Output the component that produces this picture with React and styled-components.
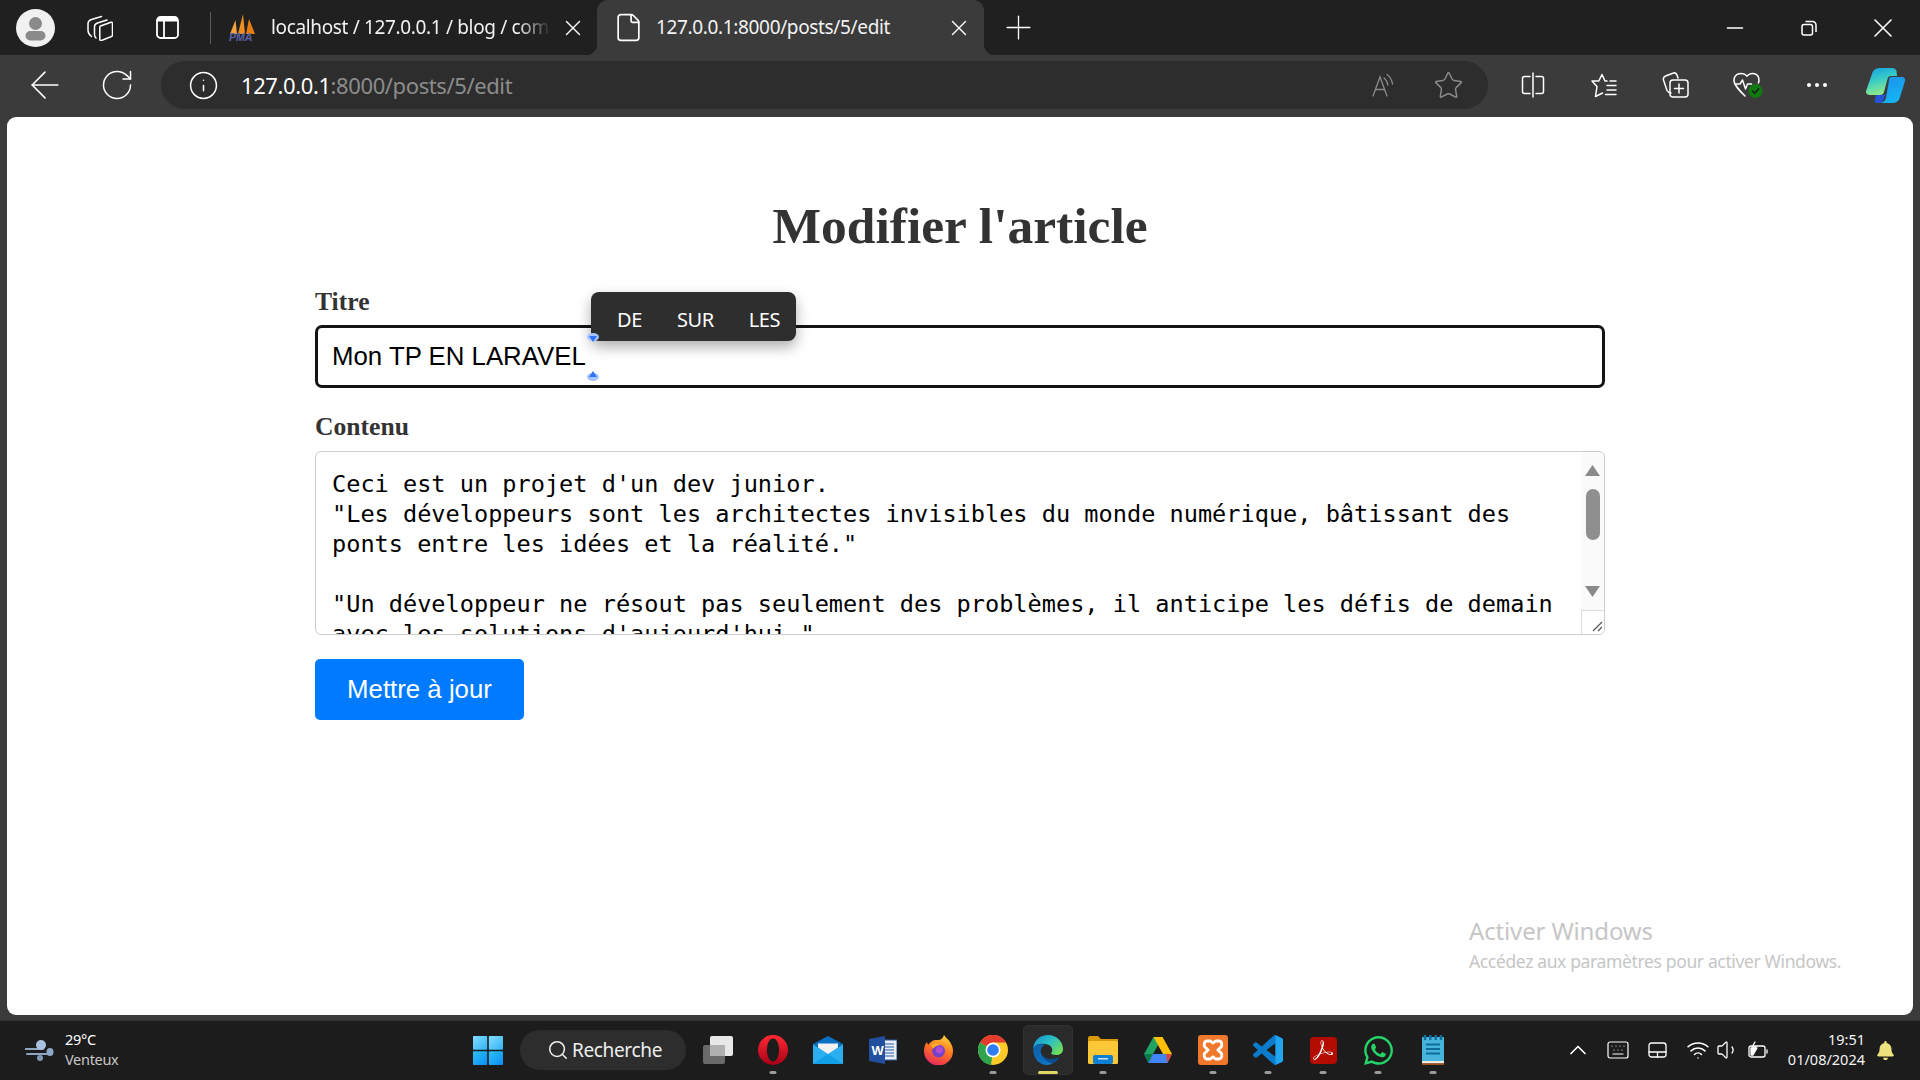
import React from "react";
import styled, { createGlobalStyle } from "styled-components";
import { ArrowLeft, RotateCw, Info, Star, X, Plus, File, Search, Keyboard, ChevronUp, Wifi, Volume1, Minus } from "lucide-react";
import { FaWhatsapp, FaBell } from "react-icons/fa";
import { SiAdobeacrobatreader } from "react-icons/si";

const GlobalStyle = createGlobalStyle`
  html, body { margin: 0; padding: 0; background: #3b3b3b; }
  * { box-sizing: border-box; }
`;

const UI_FONT = `"Noto Sans", "Open Sans", sans-serif`;

const Screen = styled.div`
  width: 1920px;
  height: 1080px;
  overflow: hidden;
  display: flex;
  flex-direction: column;
  background: #3b3b3b;
  font-family: ${UI_FONT};
`;

const TabStrip = styled.div`
  height: 55px;
  flex: none;
  display: flex;
  align-items: center;
  background: #202020;
  color: #fff;
`;

const Slot = styled.span`
  display: flex;
  flex: none;
  align-items: center;
  justify-content: center;
  width: ${(p) => p.$w}px;
  margin-left: ${(p) => p.$ml || 0}px;
  color: ${(p) => p.$color || "#fff"};
  svg { flex: none; }
`;

const Avatar = styled.span`
  flex: none;
  width: 39px;
  height: 38px;
  margin-left: 16px;
  border-radius: 50%;
  background: #f1f1f1;
  overflow: hidden;
  display: flex;
`;

const Separator = styled.span`
  flex: none;
  width: 1px;
  height: 32px;
  margin-left: 31px;
  background: #5a5a5a;
`;

const TabTitle = styled.span`
  flex: none;
  width: ${(p) => p.$w}px;
  margin-left: ${(p) => p.$ml}px;
  margin-bottom: 2px;
  font-size: 19px;
  letter-spacing: -0.35px;
  white-space: nowrap;
  overflow: hidden;
  color: #f2f2f2;
  ${(p) => p.$fade && "mask-image: linear-gradient(to right, #000 88%, transparent 100%);"}
`;

const ActiveTab = styled.div`
  position: relative;
  flex: none;
  width: 387px;
  height: 55px;
  margin-left: 17px;
  display: flex;
  align-items: center;
  background: #3b3b3b;
  border-radius: 11px 11px 0 0;
  &::before, &::after {
    content: "";
    position: absolute;
    bottom: 0;
    width: 11px;
    height: 11px;
  }
  &::before {
    left: -11px;
    background: radial-gradient(circle at 0 0, transparent 11px, #3b3b3b 11.5px);
  }
  &::after {
    right: -11px;
    background: radial-gradient(circle at 100% 0, transparent 11px, #3b3b3b 11.5px);
  }
`;

const WindowControls = styled.div`
  margin-left: auto;
  padding-right: 29px;
  display: flex;
  align-items: center;
`;

const Toolbar = styled.div`
  height: 62px;
  flex: none;
  display: flex;
  align-items: center;
  padding: 6px 0 8px;
  background: #3b3b3b;
`;

const AddressBar = styled.div`
  flex: none;
  width: 1327px;
  height: 48px;
  margin-left: 31px;
  display: flex;
  align-items: center;
  padding-right: 27px;
  border-radius: 24px;
  background: #2d2d2d;
`;

const Url = styled.span`
  margin-left: 25px;
  margin-right: auto;
  margin-bottom: 1px;
  font-size: 22px;
  letter-spacing: -0.4px;
  color: #8c8c8c;
  b { font-weight: 400; color: #fff; }
`;

const Page = styled.main`
  flex: none;
  position: relative;
  width: 1906px;
  height: 898px;
  margin-left: 7px;
  padding-top: 81px;
  display: flex;
  flex-direction: column;
  align-items: center;
  background: #fff;
  border-radius: 9px;
`;

const Heading = styled.h1`
  margin: 0 0 35px;
  font: bold 51.5px/55px "Liberation Serif", serif;
  color: #333;
`;

const Form = styled.form`
  width: 1290px;
  display: flex;
  flex-direction: column;
`;

const Label = styled.label`
  font: bold 25.6px/28px "Liberation Serif", serif;
  color: #333;
  margin-bottom: ${(p) => p.$gap}px;
`;

const InputWrap = styled.div`
  position: relative;
  margin-bottom: 25px;
`;

const TitleInput = styled.input`
  display: block;
  width: 100%;
  height: 63px;
  padding: 0 14px;
  border: 3px solid #141414;
  border-radius: 7px;
  outline: none;
  background: #fff;
  color: #000;
  font: 25.8px "Liberation Sans", Arial, sans-serif;
`;

const Suggestions = styled.div`
  position: absolute;
  left: 276px;
  top: -33px;
  width: 205px;
  height: 49px;
  padding-top: 6px;
  display: flex;
  align-items: center;
  border-radius: 8px;
  background: #2e2e2e;
  box-shadow: 0 6px 14px rgba(0, 0, 0, 0.32);
  z-index: 2;
`;

const Suggestion = styled.span`
  position: relative;
  margin-left: ${(p) => p.$ml}px;
  font-size: 20px;
  letter-spacing: -0.4px;
  color: #fff;
`;

const Handle = styled.span`
  position: absolute;
  left: 272px;
  top: ${(p) => p.$top}px;
  width: 12px;
  height: 8px;
  border-radius: 50%;
  background: #a6c4ff;
  z-index: 3;
  &::after {
    content: "";
    position: absolute;
    left: 2px;
    ${(p) => (p.$down ? "top: 3px;" : "top: -2px;")}
    width: 8px;
    height: 6px;
    background: #2f74f5;
    clip-path: ${(p) => (p.$down ? "polygon(0 0, 100% 0, 50% 100%)" : "polygon(50% 0, 100% 100%, 0 100%)")};
  }
`;

const AreaWrap = styled.div`
  position: relative;
  height: 184px;
  margin-bottom: 24px;
`;

const ContentArea = styled.textarea`
  display: block;
  width: 100%;
  height: 100%;
  padding: 17px 23px 0 16px;
  border: 1.5px solid #ccc;
  border-radius: 6px;
  outline: none;
  resize: none;
  overflow: hidden;
  color: #000;
  font: 23.58px/30px "DejaVu Sans Mono", monospace;
`;

const ScrollBar = styled.div`
  position: absolute;
  top: 2px;
  right: 2px;
  bottom: 2px;
  width: 21px;
  display: flex;
  flex-direction: column;
  align-items: center;
  padding-top: 12px;
  background: #fafafa;
  border-radius: 0 5px 5px 0;
`;

const Arrow = styled.span`
  flex: none;
  width: 15px;
  height: 11px;
  background: #8a8a8a;
  clip-path: ${(p) => (p.$down ? "polygon(0 0, 100% 0, 50% 100%)" : "polygon(50% 0, 100% 100%, 0 100%)")};
`;

const Thumb = styled.span`
  flex: none;
  width: 14px;
  height: 51px;
  margin: 13px 0 46px;
  border-radius: 7px;
  background: #8f8f8f;
`;

const Resizer = styled.span`
  position: absolute;
  right: 1px;
  bottom: 1px;
  width: 23px;
  height: 24px;
  border-top: 1px solid #dcdcdc;
  border-left: 1px solid #dcdcdc;
  background: #fff;
  border-radius: 0 0 5px 0;
  display: flex;
`;

const SubmitButton = styled.button`
  width: 209px;
  height: 61px;
  border: none;
  border-radius: 5px;
  background: #007bff;
  color: #fff;
  font: 25.8px "Liberation Sans", Arial, sans-serif;
`;

const Watermark = styled.div`
  position: absolute;
  left: 1462px;
  top: 799px;
  color: #c6c6c6;
  font-size: 17.5px;
  line-height: 30px;
  letter-spacing: -0.36px;
  white-space: nowrap;
  strong { display: block; font-weight: 400; font-size: 24px; letter-spacing: -0.15px; }
`;

const Taskbar = styled.footer`
  margin-top: 5px;
  flex: none;
  height: 60px;
  padding-bottom: 1px;
  border-top: 1px solid #333;
  display: flex;
  align-items: center;
  background: #1c1c1c;
  color: #fff;
`;

const Weather = styled.div`
  flex: none;
  width: 460px;
  display: flex;
  align-items: center;
  padding-left: 25px;
`;

const WeatherText = styled.div`
  margin: 0 0 2px 11px;
  font-size: 14.5px;
  line-height: 20px;
  letter-spacing: -0.3px;
  span { display: block; color: #c8c8c8; }
`;

const SearchPill = styled.div`
  flex: none;
  width: 166px;
  height: 40px;
  margin: 0 4.5px 0 5px;
  padding-left: 27px;
  display: flex;
  align-items: center;
  gap: 3px;
  border-radius: 20px;
  background: #2d2d2d;
  font-size: 19px;
  letter-spacing: -0.35px;
  color: #eee;
`;

const TaskSlot = styled.div`
  position: relative;
  flex: none;
  width: 55px;
  height: 50px;
  display: flex;
  align-items: center;
  justify-content: center;
  &::before {
    content: "";
    display: ${(p) => (p.$active ? "block" : "none")};
    position: absolute;
    inset: 0 2.5px;
    border-radius: 5px;
    background: #2a2a2a;
    border: 1px solid #323232;
  }
  svg { position: relative; }
`;

const Dot = styled.span`
  position: absolute;
  left: 50%;
  bottom: 1px;
  width: ${(p) => (p.$active ? 20 : 7)}px;
  height: 3px;
  transform: translateX(-50%);
  border-radius: 2px;
  background: ${(p) => (p.$active ? "#dcd862" : "#9a9a9a")};
`;

const Tray = styled.div`
  margin-left: auto;
  padding-right: 26px;
  display: flex;
  align-items: center;
`;

const Clock = styled.div`
  flex: none;
  width: 80px;
  margin: 0 0 2px 17px;
  text-align: right;
  font-size: 14.5px;
  line-height: 20px;
  color: #f4f4f4;
`;

/* ---- drawn icons ---- */

const Line = { fill: "none", stroke: "currentColor", strokeWidth: 1.5, strokeLinecap: "round", strokeLinejoin: "round" };

const ProfileGlyph = () => (
  <svg width="39" height="38" viewBox="0 0 39 38">
    <circle cx="19.5" cy="14.5" r="6.5" fill="#8a8a8a" />
    <rect x="9.5" y="22" width="20" height="9.5" rx="4.7" fill="#8a8a8a" />
  </svg>
);

const WorkspacesIcon = () => (
  <svg width="26" height="26" viewBox="0 0 26 26" {...Line}>
    <path d="M13.500 11 24 7.200c.8-.2 1.500.3 1.500 1.100V20c0 .8-.4 1.300-1 1.500l-10 4c-1 .3-1.700-.3-1.700-1.200V12.500c0-.8.200-1.300.700-1.500z" />
    <path d="M20 5 10.500 8c-2 .7-3 1.700-3 3.500v8c0 1.500.5 2.700 1.500 3.500" />
    <path d="M14.500 1.500 4.500 4.500C2.500 5.200 1 6.500 1 8.500v7c0 2.500 1.500 4.500 3.500 6" />
  </svg>
);

const VerticalTabsIcon = () => (
  <svg width="23" height="23" viewBox="0 0 23 23" fill="none" stroke="currentColor" strokeWidth="1.8">
    <rect x="1" y="1" width="21" height="21" rx="3.500" />
    <path d="M1 4.500h21M8 5v17" />
    <path d="M2 3h19" strokeWidth="3" />
  </svg>
);

const PmaIcon = () => (
  <svg width="27" height="27" viewBox="0 0 27 27">
    <path d="M1 20 6.500 6 8 20z" fill="#f5a23a" />
    <path d="M9 20 14 0l2 20z" fill="#ef8f22" />
    <path d="M17 20 20 5l6 15z" fill="#e77d10" />
    <text x="0" y="27" fontFamily="Liberation Sans" fontStyle="italic" fontWeight="700" fontSize="10.500" fill="#5a64a8">PMA</text>
  </svg>
);

const RestoreIcon = () => (
  <svg width="16" height="16" viewBox="0 0 16 16" {...Line} strokeLinecap="butt">
    <rect x="1" y="4.500" width="10.500" height="10.500" rx="2" />
    <path d="M4.500 1.500h7a3.500 3.500 0 0 1 3.500 3.500v7" />
  </svg>
);

const ReadAloudIcon = () => (
  <svg width="24" height="24" viewBox="0 0 24 24" fill="none" stroke="currentColor" strokeWidth="1.300" strokeLinecap="round">
    <path d="M1 23 8 4l7 19M3.500 16.500h9" />
    <path d="M12 5c2 1.500 3.500 4 3.800 7M15 1.500c3 2.300 5 5.500 5.500 9.500" />
  </svg>
);

const SplitIcon = () => (
  <svg width="24" height="26" viewBox="0 0 24 26" {...Line}>
    <path d="M9 4.500H3.500a2 2 0 0 0-2 2v13a2 2 0 0 0 2 2H9M15 4.500h5.500a2 2 0 0 1 2 2v13a2 2 0 0 1-2 2H15" />
    <path d="M12 1v24" />
  </svg>
);

const FavoritesIcon = () => (
  <svg width="26" height="25" viewBox="0 0 26 25" {...Line}>
    <path d="M11 1.500 14 8h2M7.800 8H1l5 5.500L4.500 23.500 11.500 20M11 1.500 7.800 8" />
    <path d="M16 12.500h9M16 17h9M14.500 21.500H25M19 8h6" />
  </svg>
);

const CollectionsIcon = () => (
  <svg width="27" height="26" viewBox="0 0 27 26" {...Line}>
    <path d="M9 21c-2 0-3-.7-4-2.500L1.500 8C1 6 1.700 4.800 3.500 4l8-3c2-.500 3 .5 3.500 2l1 3" />
    <rect x="8" y="8" width="18" height="17" rx="3" />
    <path d="M17 12v9M12.500 16.500h9" />
  </svg>
);

const HealthIcon = () => (
  <svg width="30" height="26" viewBox="0 0 30 26" {...Line}>
    <path d="M14 4C10 -.500 1 1 1 8.500 1 13 6 18 12 24" />
    <path d="M14 4c4-4.500 12-3 12 4 0 1-.2 2-.6 3" />
    <path d="M2 12h5l2.500-4 3 9 2-5h4" />
    <circle cx="22.500" cy="19" r="7" fill="#0f7b0f" stroke="none" />
    <path d="m19.500 19 2.200 2.300 4-4.500" stroke="#1c1c1c" strokeWidth="1.600" />
  </svg>
);

const DotsIcon = () => (
  <svg width="22" height="6" viewBox="0 0 22 6" fill="currentColor">
    <circle cx="3" cy="3" r="2" />
    <circle cx="11" cy="3" r="2" />
    <circle cx="19" cy="3" r="2" />
  </svg>
);

const CopilotIcon = () => (
  <svg width="39" height="35" viewBox="0 0 39 35">
    <defs>
      <linearGradient id="copA" x1="0" y1="0" x2="0.3" y2="1">
        <stop offset="0" stopColor="#0f9fe8" />
        <stop offset="0.55" stopColor="#3fd0c0" />
        <stop offset="1" stopColor="#8fe88c" />
      </linearGradient>
      <linearGradient id="copB" x1="0" y1="0" x2="0.4" y2="1">
        <stop offset="0" stopColor="#1f8fe8" />
        <stop offset="1" stopColor="#14b4f4" />
      </linearGradient>
    </defs>
    <path d="M23 0h3c2 0 4 1 4.500 3L31 8h-6c-2 0-3 1-3.500 3L18 24c-.5 2-2 3-4 3H4c-3 0-4.500-2-4-4L6 6c1-4 4-6 8-6z" fill="url(#copA)" />
    <path d="M10 27h6l4-1-3 7c-.500 1-1.500 2-3 2h-3c-2 0-3-2-2-4z" fill="#2554d8" />
    <path d="M25 9h11c2 0 3.500 1.500 3 4L34 29c-1 4-4 6-8 6H13c4 0 6-2 7-5l3-18c.3-2 1-3 2-3z" fill="url(#copB)" />
  </svg>
);

const WindIcon = () => (
  <svg width="29" height="21" viewBox="0 0 29 21">
    <path d="M0 9h18M2 14h24" stroke="#8fa4bf" strokeWidth="2" strokeLinecap="round" />
    <ellipse cx="16" cy="5" rx="5" ry="5" fill="#a9c0de" />
    <ellipse cx="15" cy="18" rx="3" ry="3" fill="#7f97b8" />
    <ellipse cx="25" cy="12" rx="3.500" ry="4" fill="#8ea8c9" />
  </svg>
);

const WindowsLogo = () => (
  <svg width="30" height="29" viewBox="0 0 30 29">
    <defs>
      <linearGradient id="winT" x1="0" y1="0" x2="1" y2="1">
        <stop offset="0" stopColor="#86dcff" />
        <stop offset="1" stopColor="#2fb4f6" />
      </linearGradient>
      <linearGradient id="winB" x1="0" y1="0" x2="1" y2="1">
        <stop offset="0" stopColor="#2fc0fb" />
        <stop offset="1" stopColor="#0b8ef0" />
      </linearGradient>
    </defs>
    <rect x="0" y="0" width="14.200" height="13.800" rx="1" fill="url(#winT)" />
    <rect x="15.800" y="0" width="14.200" height="13.800" rx="1" fill="url(#winT)" />
    <rect x="0" y="15.200" width="14.200" height="13.800" rx="1" fill="url(#winB)" />
    <rect x="15.800" y="15.200" width="14.200" height="13.800" rx="1" fill="url(#winB)" />
  </svg>
);

const TaskViewIcon = () => (
  <svg width="30" height="28" viewBox="0 0 30 28">
    <rect x="0" y="9" width="22" height="19" rx="2" fill="#6a6a6a" />
    <rect x="7" y="0" width="23" height="20" rx="2" fill="#e8e8e8" />
    <rect x="7" y="9" width="15" height="11" fill="#b0b0b0" />
  </svg>
);

const OperaIcon = () => (
  <svg width="30" height="30" viewBox="0 0 30 30">
    <defs>
      <linearGradient id="opr" x1="0" y1="0" x2="0" y2="1">
        <stop offset="0" stopColor="#ff2a35" />
        <stop offset="1" stopColor="#a70014" />
      </linearGradient>
    </defs>
    <circle cx="15" cy="15" r="15" fill="url(#opr)" />
    <ellipse cx="15" cy="15" rx="6.200" ry="11.500" fill="#1c1c1c" />
  </svg>
);

const MailIcon = () => (
  <svg width="30" height="28" viewBox="0 0 30 28">
    <path d="M0 8 15 0l15 8-15 9z" fill="#0b6fc4" />
    <path d="M5 7.500h20V13l-10 6-10-6z" fill="#f2f2f2" />
    <path d="M0 8l15 10L30 8v20H0z" fill="#2aaef0" />
    <path d="M0 28l15-10 15 10z" fill="#119fe6" />
  </svg>
);

const WordIcon = () => (
  <svg width="28" height="28" viewBox="0 0 28 28">
    <rect x="11" y="4" width="17" height="20" fill="#e8eef8" stroke="#2d5aa8" strokeWidth="1" />
    <path d="M15 8h10M15 11h10M15 14h10M15 17h10M15 20h10" stroke="#2d5aa8" strokeWidth="1.200" />
    <path d="M0 3 16 0v28L0 25z" fill="#23509e" />
    <text x="2.500" y="19" fontFamily="Liberation Sans" fontWeight="700" fontSize="13" fill="#fff">W</text>
  </svg>
);

const FirefoxIcon = () => (
  <svg width="29" height="30" viewBox="0 0 29 30">
    <defs>
      <linearGradient id="ff" x1="0.7" y1="0" x2="0.3" y2="1">
        <stop offset="0" stopColor="#ffd33a" />
        <stop offset="0.45" stopColor="#ff7a1f" />
        <stop offset="1" stopColor="#e8265e" />
      </linearGradient>
    </defs>
    <path d="M20 0c2 3 4 4 6 7 2 3 3 6 3 9a14.500 14.500 0 0 1-29 0c0-4 1-7 3-9l1 3c2-3 5-5 8-5 4 0 6 0 8-5z" fill="url(#ff)" />
    <circle cx="14.500" cy="16" r="6.500" fill="#7542c8" />
    <circle cx="15.500" cy="15" r="3.500" fill="#b04ad0" />
    <path d="M7 9c3-1 6-1 10 1-3 0-6 1-8 4z" fill="#ffad2e" />
  </svg>
);

const ChromeIcon = () => (
  <svg width="30" height="30" viewBox="0 0 30 30">
    <circle cx="15" cy="15" r="15" fill="#ffc928" />
    <path d="M15 15 2 7.500A15 15 0 0 1 28 7.500H15z" fill="#e33b2e" />
    <path d="M15 15 2 7.500A15 15 0 0 0 13 29.900z" fill="#2ea44f" />
    <circle cx="15" cy="15" r="7.500" fill="#fff" />
    <circle cx="15" cy="15" r="5.800" fill="#2f7df0" />
  </svg>
);

const EdgeIcon = () => (
  <svg width="30" height="30" viewBox="0 0 30 30">
    <defs>
      <linearGradient id="edgeA" x1="0" y1="0" x2="1" y2="0.7">
        <stop offset="0" stopColor="#0f8ed8" />
        <stop offset="0.55" stopColor="#2cc1c0" />
        <stop offset="1" stopColor="#6fdc58" />
      </linearGradient>
      <linearGradient id="edgeB" x1="0" y1="0" x2="1" y2="1">
        <stop offset="0" stopColor="#0c5ea8" />
        <stop offset="1" stopColor="#0e79c8" />
      </linearGradient>
    </defs>
    <path d="M0 14C1 5 7 0 15 0c9 0 15 7 15 14 0 4-3 6-7 6-3 0-5-1-5-2 2-1 2-6-2-8C10 8 3 8 0 14z" fill="url(#edgeA)" />
    <path d="M0 14c2-5 8-6 12-4-3 1-5 4-4 8 1 5 6 9 12 10-2 1-3 2-6 2C6 30 0 23 0 14z" fill="url(#edgeB)" />
    <path d="M20 28c-6-1-11-5-12-10 1 3 5 6 10 6 3 0 6-1 8-2-1 3-3 5-6 6z" fill="#0a4f96" />
  </svg>
);

const FolderIcon = () => (
  <svg width="30" height="28" viewBox="0 0 30 28">
    <path d="M0 2c0-1 1-2 2-2h8l3 3h17v6H0z" fill="#d99a0c" />
    <rect x="0" y="5" width="30" height="23" rx="1.500" fill="#fcc838" />
    <rect x="5" y="19" width="20" height="9" rx="2" fill="#0f7fd4" />
    <rect x="10" y="22" width="10" height="1.500" fill="#c8e6fa" />
  </svg>
);

const DriveIcon = () => (
  <svg width="28" height="26" viewBox="0 0 28 26">
    <path d="M9.500 0h9L9 17H0z" fill="#1fa463" />
    <path d="M18.500 0 28 17h-9L9.500 0z" fill="#ffc107" />
    <path d="M4.500 26 0 17h28l-4.500 9z" fill="#4285f4" />
    <path d="M23.500 26 28 17h-6z" fill="#db4437" />
    <path d="M0 17l4.500 9L9 17z" fill="#0d7a4a" />
  </svg>
);

const XamppIcon = () => (
  <svg width="30" height="30" viewBox="0 0 30 30">
    <rect width="30" height="30" rx="3" fill="#f0782d" />
    <path d="M9 6h3c1.500 0 2 2 3 2s1.500-2 3-2h3c3 0 4 5.500 1 7l-2 2 2 2c3 1.500 2 7-1 7h-3c-1.500 0-2-2-3-2s-1.500 2-3 2H9c-3 0-4-5.500-1-7l2-2-2-2C5 11.500 6 6 9 6z" fill="none" stroke="#fff" strokeWidth="2.800" />
  </svg>
);

const VsCodeIcon = () => (
  <svg width="30" height="30" viewBox="0 0 24 24">
    <path fill="#0a7ccb" d="M23.150 2.587 18.210.21a1.494 1.494 0 0 0-1.705.29l-9.460 8.630-4.120-3.128a.999.999 0 0 0-1.276.057L.327 7.261A1 1 0 0 0 .326 8.740L3.899 12 .326 15.260a1 1 0 0 0 .001 1.479L1.650 17.940a.999.999 0 0 0 1.276.057l4.120-3.128 9.460 8.630a1.492 1.492 0 0 0 1.704.29l4.942-2.377A1.500 1.500 0 0 0 24 20.060V3.939a1.500 1.500 0 0 0-.85-1.352zm-5.146 14.861L10.826 12l7.178-5.448v10.896z" />
    <path fill="#22a5f0" d="M18.004 0v6.552V17.448V24l5.146-2.474A1.500 1.500 0 0 0 24 20.060V3.939a1.500 1.500 0 0 0-.85-1.352L18.210.21z" />
  </svg>
);

const AcrobatBox = styled.span`
  width: 27px;
  height: 27px;
  border-radius: 4px;
  background: #b30b00;
  color: #fff;
  display: flex;
  align-items: center;
  justify-content: center;
`;

const NotepadIcon = () => (
  <svg width="22" height="30" viewBox="0 0 22 30">
    <rect y="2" width="22" height="24" fill="#46b4dc" />
    <rect y="26" width="22" height="2.500" fill="#f2e9dc" />
    <rect y="28.500" width="22" height="1.500" fill="#9c4f18" />
    <path d="M4 9.500h14M4 14h14M4 18.500h14" stroke="#0f6d9c" strokeWidth="2" />
    <path d="M3 0v4M8.300 0v4M13.700 0v4M19 0v4" stroke="#0f6d9c" strokeWidth="2.500" strokeLinecap="round" />
  </svg>
);

const TouchpadIcon = () => (
  <svg width="19" height="16" viewBox="0 0 19 16" {...Line} strokeWidth="1.300">
    <rect x="1" y="1" width="17" height="14" rx="2.500" />
    <path d="M1 10h17M9.500 10v5" />
  </svg>
);

const BatteryIcon = () => (
  <svg width="20" height="18" viewBox="0 0 20 18" {...Line} strokeWidth="1.300">
    <rect x="1" y="5" width="16" height="11" rx="2" />
    <path d="M19 9v3" />
    <path d="M3 14V7h6l-4 7z" fill="currentColor" />
    <path d="M7 1 4 6h4L6 9" />
  </svg>
);

const taskIcons = [
  { key: "task", node: <TaskViewIcon /> },
  { key: "opera", node: <OperaIcon />, open: true },
  { key: "mail", node: <MailIcon /> },
  { key: "word", node: <WordIcon /> },
  { key: "firefox", node: <FirefoxIcon /> },
  { key: "chrome", node: <ChromeIcon />, open: true },
  { key: "edge", node: <EdgeIcon />, open: true, active: true },
  { key: "folder", node: <FolderIcon />, open: true },
  { key: "drive", node: <DriveIcon /> },
  { key: "xampp", node: <XamppIcon />, open: true },
  { key: "vscode", node: <VsCodeIcon />, open: true },
  { key: "acrobat", node: <AcrobatBox><SiAdobeacrobatreader size={20} /></AcrobatBox>, open: true },
  { key: "whatsapp", node: <FaWhatsapp size={33} color="#25d366" />, open: true },
  { key: "notepad", node: <NotepadIcon />, open: true },
];

const CONTENT = `Ceci est un projet d'un dev junior.
"Les développeurs sont les architectes invisibles du monde numérique, bâtissant des ponts entre les idées et la réalité."

"Un développeur ne résout pas seulement des problèmes, il anticipe les défis de demain avec les solutions d'aujourd'hui."`;

function App() {
  return (
    <Screen>
      <GlobalStyle />
      <TabStrip>
        <Avatar><ProfileGlyph /></Avatar>
        <Slot $w={26} $ml={32}><WorkspacesIcon /></Slot>
        <Slot $w={23} $ml={43}><VerticalTabsIcon /></Slot>
        <Separator />
        <Slot $w={27} $ml={18}><PmaIcon /></Slot>
        <TabTitle $w={280} $ml={15} $fade>localhost / 127.0.0.1 / blog / comments</TabTitle>
        <Slot $w={14} $ml={15}><X size={26} strokeWidth={1.3} /></Slot>
        <ActiveTab>
          <Slot $w={21} $ml={21}><File size={31} strokeWidth={1.3} /></Slot>
          <TabTitle $w={296} $ml={17}>127.0.0.1:8000/posts/5/edit</TabTitle>
          <Slot $w={14}><X size={26} strokeWidth={1.3} /></Slot>
        </ActiveTab>
        <Slot $w={23} $ml={23}><Plus size={39} strokeWidth={0.8} /></Slot>
        <WindowControls>
          <Slot $w={16}><Minus size={26} strokeWidth={1.3} /></Slot>
          <Slot $w={16} $ml={58}><RestoreIcon /></Slot>
          <Slot $w={16} $ml={58}><X size={32} strokeWidth={1.15} /></Slot>
        </WindowControls>
      </TabStrip>

      <Toolbar>
        <Slot $w={26} $ml={32}><ArrowLeft size={44} strokeWidth={0.85} /></Slot>
        <Slot $w={27} $ml={45}><RotateCw size={36} strokeWidth={1} /></Slot>
        <AddressBar>
          <Slot $w={26} $ml={29}><Info size={31} strokeWidth={1.15} /></Slot>
          <Url><b>127.0.0.1</b>:8000/posts/5/edit</Url>
          <Slot $w={24} $color="#8a8a8a"><ReadAloudIcon /></Slot>
          <Slot $w={26} $ml={39} $color="#8a8a8a"><Star size={31} strokeWidth={1.15} /></Slot>
        </AddressBar>
        <Slot $w={24} $ml={33}><SplitIcon /></Slot>
        <Slot $w={26} $ml={46}><FavoritesIcon /></Slot>
        <Slot $w={27} $ml={45}><CollectionsIcon /></Slot>
        <Slot $w={30} $ml={44}><HealthIcon /></Slot>
        <Slot $w={22} $ml={43}><DotsIcon /></Slot>
        <Slot $w={39} $ml={38}><CopilotIcon /></Slot>
      </Toolbar>

      <Page>
        <Heading>Modifier l'article</Heading>
        <Form onSubmit={(e) => e.preventDefault()}>
          <Label htmlFor="titre" $gap={9}>Titre</Label>
          <InputWrap>
            <TitleInput id="titre" defaultValue="Mon TP EN LARAVEL" readOnly />
            <Suggestions>
              <Suggestion $ml={26}>DE</Suggestion>
              <Suggestion $ml={35}>SUR</Suggestion>
              <Suggestion $ml={35}>LES</Suggestion>
            </Suggestions>
            <Handle $top={8} $down />
            <Handle $top={48} />
          </InputWrap>
          <Label htmlFor="contenu" $gap={10}>Contenu</Label>
          <AreaWrap>
            <ContentArea id="contenu" defaultValue={CONTENT} readOnly />
            <ScrollBar>
              <Arrow />
              <Thumb />
              <Arrow $down />
            </ScrollBar>
            <Resizer>
              <svg width="21" height="22" viewBox="0 0 21 22" stroke="#555" strokeWidth="1.2">
                <path d="M11 20 20 11M16 20l4-4" />
              </svg>
            </Resizer>
          </AreaWrap>
          <SubmitButton type="submit">Mettre à jour</SubmitButton>
        </Form>
        <Watermark>
          <strong>Activer Windows</strong>
          Accédez aux paramètres pour activer Windows.
        </Watermark>
      </Page>

      <Taskbar>
        <Weather>
          <WindIcon />
          <WeatherText>29°C<span>Venteux</span></WeatherText>
        </Weather>
        <TaskSlot><WindowsLogo /></TaskSlot>
        <SearchPill>
          <Search size={22} strokeWidth={1.7} />
          Recherche
        </SearchPill>
        {taskIcons.map((item) => (
          <TaskSlot key={item.key} $active={item.active}>
            {item.node}
            {item.open && <Dot $active={item.active} />}
          </TaskSlot>
        ))}
        <Tray>
          <Slot $w={14}><ChevronUp size={28} strokeWidth={1.5} /></Slot>
          <Slot $w={20} $ml={23}><Keyboard size={24} strokeWidth={1.2} /></Slot>
          <Slot $w={19} $ml={20}><TouchpadIcon /></Slot>
          <Slot $w={20} $ml={21}><Wifi size={24} strokeWidth={1.5} /></Slot>
          <Slot $w={20} $ml={10}><Volume1 size={24} strokeWidth={1.3} /></Slot>
          <Slot $w={20} $ml={10}><BatteryIcon /></Slot>
          <Clock>19:51<br />01/08/2024</Clock>
          <Slot $w={17} $ml={12} $color="#eee27e"><FaBell size={19} /></Slot>
        </Tray>
      </Taskbar>
    </Screen>
  );
}

export default App;
